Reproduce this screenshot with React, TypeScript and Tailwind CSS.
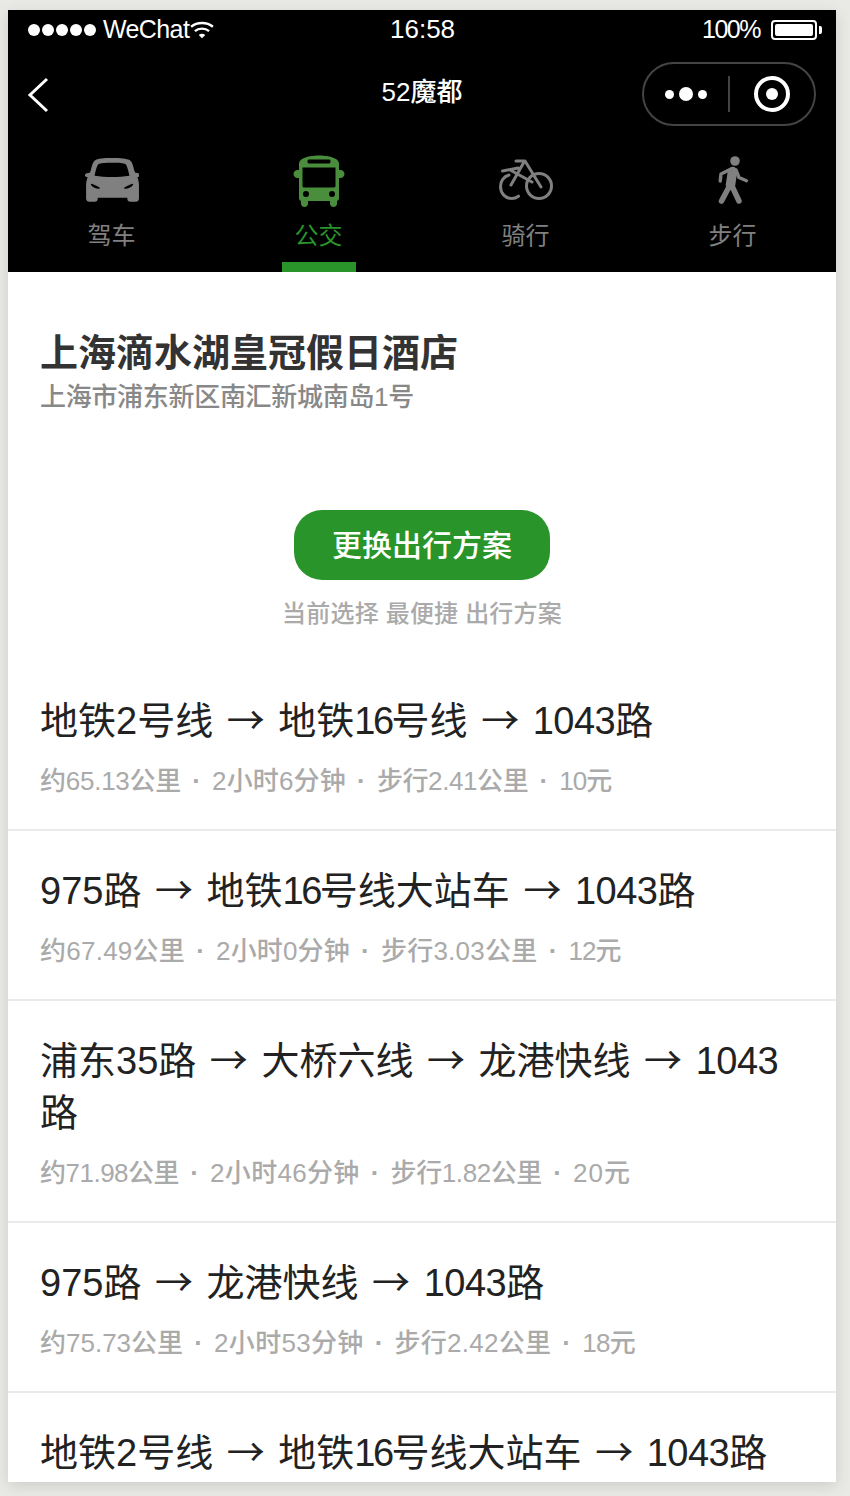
import React from "react";

const FONT = "[font-family:'Liberation_Sans','Noto_Sans_CJK_SC',sans-serif]";

function Car() {
  return (
    <svg width="54" height="46" viewBox="1.500 0 51 43.500" fill="#808080">
      <path fillRule="evenodd" d="M27 0c8 0 14 .6 16.500 2 2 1.200 3 3 4.500 9.500l1 2.500c2 0 4 .7 4.500 1.800.4 1-.4 2-2.500 2.300 1 2.500 1.500 5 1.500 8v12c0 2-1 3.200-3 3.200h-5c-2 0-3-1-3-3v-.8H13.500v.8c0 2-1 3-3 3h-5c-2 0-3-1.200-3-3.200v-12c0-3 .5-5.500 1.500-8-2.100-.3-2.900-1.300-2.500-2.300.5-1.100 2.500-1.800 4.500-1.800l1-2.500C8.500 5 9.500 3.200 11.500 2 13 .6 19 0 27 0zm0 4.500c-7 0-11 .4-12.500 1.200-1.200.7-2 2.500-4 11 5 .8 11 1.200 16.500 1.200s11.500-.4 16.500-1.200c-2-8.500-2.800-10.300-4-11C38 4.900 34 4.500 27 4.500zM7 25c1 2.500 4 4 8 4 .5 0 .7-.6.300-1-2-1.500-5-3-7.800-3.700-.4-.1-.6.300-.5.700zm40 0c-1 2.500-4 4-8 4-.5 0-.7-.6-.3-1 2-1.500 5-3 7.800-3.700.4-.1.600.3.500.700z" />
    </svg>
  );
}

function Bus() {
  return (
    <svg width="52" height="52" viewBox="0 0 52 52" fill="#4a8d3d">
      <path fillRule="evenodd" d="M9 4C13 1.500 20 .5 26 .5S39 1.500 43 4c2 1.300 3 3 3 5v6h1.500c2.200 0 4 1.800 4 4s-1.800 4-4 4H46v20c0 1.500-.8 2.500-2 3v2.500c0 2-1.500 3.500-3.500 3.500S37 50.500 37 48.500V46H15v2.500c0 2-1.500 3.500-3.500 3.500S8 50.500 8 48.500V46c-1.200-.5-2-1.500-2-3V23H4.500c-2.200 0-4-1.800-4-4s1.800-4 4-4H6V9c0-2 1-3.700 3-5zm7 .5c-.8 0-1.500.7-1.500 1.500v1c0 .8.700 1.500 1.500 1.500h20c.8 0 1.500-.7 1.500-1.500V6c0-.8-.7-1.500-1.500-1.500H16zM9.500 12.500V31c0 .8.700 1.500 1.500 1.500h30c.8 0 1.500-.7 1.500-1.500V12.500h-33zM13 36a3 3 0 1 0 0 6 3 3 0 0 0 0-6zm26 0a3 3 0 1 0 0 6 3 3 0 0 0 0-6z" />
    </svg>
  );
}

function Bike() {
  return (
    <svg width="54" height="44" viewBox="0 0 54 44" fill="none" stroke="#808080" strokeWidth="3" strokeLinecap="round" strokeLinejoin="round">
      <circle cx="40" cy="27" r="12.500" />
      <path d="M10 16C4.500 17.500 1.500 22.500 1.500 27.500c0 7 5 12 11 12 2.500 0 5-.8 7-2.300" />
      <path d="M17 2h9l16 26" />
      <path d="M25 3 12 26M3.500 12 19 9M12 11.500l21 11.500" />
    </svg>
  );
}

function Walk() {
  return (
    <svg width="34" height="50" viewBox="0 0 34 50" fill="none" stroke="#808080" strokeLinecap="round" strokeLinejoin="round">
      <circle cx="19" cy="5" r="4.800" fill="#808080" stroke="none" />
      <path d="M16.500 15.500 14.500 29" strokeWidth="9.500" />
      <path d="M13.500 30 5.500 45M15.500 29 23 45" strokeWidth="5.500" />
      <path d="M20 14l3 7.500 7.500 3.200M13 14l-8 4-.8 7" strokeWidth="3.400" />
    </svg>
  );
}

function Tab({ label, active, icon }: { label: string; active?: boolean; icon: React.ReactNode }) {
  return (
    <div className="relative flex flex-col items-center pt-[15px]">
      <div className="flex h-[56px] items-center justify-center">{icon}</div>
      <div className={`mt-[10px] text-[24px] leading-[34px] ${active ? "text-[#28942a]" : "text-[#808080]"}`}>{label}</div>
      {active && <div className="absolute bottom-0 h-[10px] w-[74px] bg-[#28942a]" />}
    </div>
  );
}

const ARROW = <span className="mx-[3px] leading-none [font-family:'Noto_Sans_CJK_SC',sans-serif]">→</span>;
const SIXTEEN = <span className="tracking-[-2.500px]">16</span>;
const BUS_1043 = <span className="tracking-[-0.500px]">1043</span>;

type Meta = { text: string; track: string };

function Route({ title, meta, last }: { title: React.ReactNode; meta?: Meta[]; last?: boolean }) {
  return (
    <div className={`pl-[32px] pr-[33px] pt-[34px] ${last ? "" : "border-b-2 border-[#ebebeb] pb-[30px]"}`}>
      <div className="text-[38px] leading-[52px] text-[#222222]">{title}</div>
      {meta && (
        <div className="mt-[16px] flex text-[26px] font-medium leading-[36px] text-[#aaaaaa]">
          {meta.map((m, i) => (
            <React.Fragment key={m.text}>
              {i > 0 && <span className="w-[31px] text-center font-bold">·</span>}
              <span className={m.track}>{m.text}</span>
            </React.Fragment>
          ))}
        </div>
      )}
    </div>
  );
}

export default function App() {
  return (
    <div className={`${FONT} h-[1496px] w-[850px] overflow-hidden bg-[#e9e9e5] pl-[8px] pt-[10px]`}>
      <div className="h-[1472px] w-[828px] overflow-hidden bg-white shadow-[0_4px_14px_rgba(0,0,0,0.12)]">
        <header className="h-[262px] bg-black text-white">
          <div className="relative flex h-[40px] items-center justify-between pl-[20px] pr-[14px] text-[25px]">
            <div className="flex items-center">
              <span className="flex gap-[2px]">
                {[0, 1, 2, 3, 4].map((i) => (
                  <span key={i} className="h-[12px] w-[12px] rounded-full bg-white" />
                ))}
              </span>
              <span className="ml-[7px] tracking-[-0.6px]">WeChat</span>
              <svg width="24" height="18" viewBox="0 0 22 16" fill="none" stroke="white" strokeWidth="2.200" className="ml-[1px]">
                <path d="M1 5c5.500-4.500 14.500-4.500 20 0M4.500 9c3.500-3 9.500-3 13 0" />
                <path d="M8 12.500c1.800-1.500 4.200-1.500 6 0L11 15.500z" fill="white" stroke="none" />
              </svg>
            </div>
            <span className="absolute left-[382px] top-[0px] text-[26px]">16:58</span>
            <div className="flex items-center">
              <span className="tracking-[-1.500px]">100%</span>
              <span className="ml-[11px] flex h-[20px] w-[46px] items-center rounded-[4px] border-2 border-white p-[2px]">
                <span className="h-full w-full rounded-[2px] bg-white" />
              </span>
              <span className="ml-[2px] h-[8px] w-[3px] rounded-r-[2px] bg-white" />
            </div>
          </div>
          <div className="relative flex h-[88px] items-center justify-center">
            <svg width="22" height="36" viewBox="0 0 22 36" fill="none" stroke="white" strokeWidth="3" className="absolute left-[19px] top-[27px]">
              <path d="M20 2 3 18l17 16" />
            </svg>
            <span className="mt-[-4px] text-[26px] font-medium">52魔都</span>
            <div className="absolute left-[634px] top-[12px] flex h-[64px] w-[174px] items-center rounded-full border-2 border-[#444444]">
              <div className="flex w-[84px] items-center justify-center gap-[5px]">
                <span className="h-[9px] w-[9px] rounded-full bg-white" />
                <span className="h-[14px] w-[14px] rounded-full bg-white" />
                <span className="h-[9px] w-[9px] rounded-full bg-white" />
              </div>
              <div className="h-[36px] w-[2px] bg-[#444444]" />
              <div className="flex flex-1 items-center justify-center">
                <span className="flex h-[36px] w-[36px] items-center justify-center rounded-full border-[4px] border-white">
                  <span className="h-[12px] w-[12px] rounded-full bg-white" />
                </span>
              </div>
            </div>
          </div>
          <div className="grid h-[134px] grid-cols-4">
            <Tab label="驾车" icon={<Car />} />
            <Tab label="公交" active icon={<Bus />} />
            <Tab label="骑行" icon={<Bike />} />
            <Tab label="步行" icon={<Walk />} />
          </div>
        </header>
        <main>
          <section className="pl-[32px] pr-[33px] pt-[55px]">
            <h1 className="text-[38px] font-bold leading-[52px] text-[#333333]">上海滴水湖皇冠假日酒店</h1>
            <p className="text-[26px] font-medium leading-[36px] tracking-[-0.3px] text-[#888888]">上海市浦东新区南汇新城南岛1号</p>
          </section>
          <section className="flex flex-col items-center pt-[95px]">
            <button className="h-[70px] w-[256px] rounded-[28px] bg-[#28942a] text-[30px] font-medium text-white">更换出行方案</button>
            <p className="mt-[17px] text-[24px] font-medium leading-[34px] tracking-[0.2px] text-[#aaaaaa]">当前选择 最便捷 出行方案</p>
          </section>
          <section className="mt-[30px]">
            <Route
              title={<>地铁2号线 {ARROW} 地铁{SIXTEEN}号线 {ARROW} {BUS_1043}路</>}
              meta={[
                { text: "约65.13公里", track: "tracking-[-0.25px]" },
                { text: "2小时6分钟", track: "tracking-[0.15px]" },
                { text: "步行2.41公里", track: "tracking-[-0.4px]" },
                { text: "10元", track: "tracking-[-1px]" },
              ]}
            />
            <Route
              title={<>975路 {ARROW} 地铁{SIXTEEN}号线大站车 {ARROW} {BUS_1043}路</>}
              meta={[
                { text: "约67.49公里", track: "tracking-[0.25px]" },
                { text: "2小时0分钟", track: "tracking-[0.15px]" },
                { text: "步行3.03公里", track: "tracking-[0.25px]" },
                { text: "12元", track: "tracking-[-1px]" },
              ]}
            />
            <Route
              title={<>浦东35路 {ARROW} 大桥六线 {ARROW} 龙港快线 {ARROW} {BUS_1043}路</>}
              meta={[
                { text: "约71.98公里", track: "tracking-[-0.5px]" },
                { text: "2小时46分钟", track: "tracking-[0.3px]" },
                { text: "步行1.82公里", track: "tracking-[-0.4px]" },
                { text: "20元", track: "tracking-[1px]" },
              ]}
            />
            <Route
              title={<>975路 {ARROW} 龙港快线 {ARROW} {BUS_1043}路</>}
              meta={[
                { text: "约75.73公里", track: "tracking-[0px]" },
                { text: "2小时53分钟", track: "tracking-[0.3px]" },
                { text: "步行2.42公里", track: "tracking-[0.25px]" },
                { text: "18元", track: "tracking-[-0.7px]" },
              ]}
            />
            <Route title={<>地铁2号线 {ARROW} 地铁{SIXTEEN}号线大站车 {ARROW} {BUS_1043}路</>} last />
          </section>
        </main>
      </div>
    </div>
  );
}
